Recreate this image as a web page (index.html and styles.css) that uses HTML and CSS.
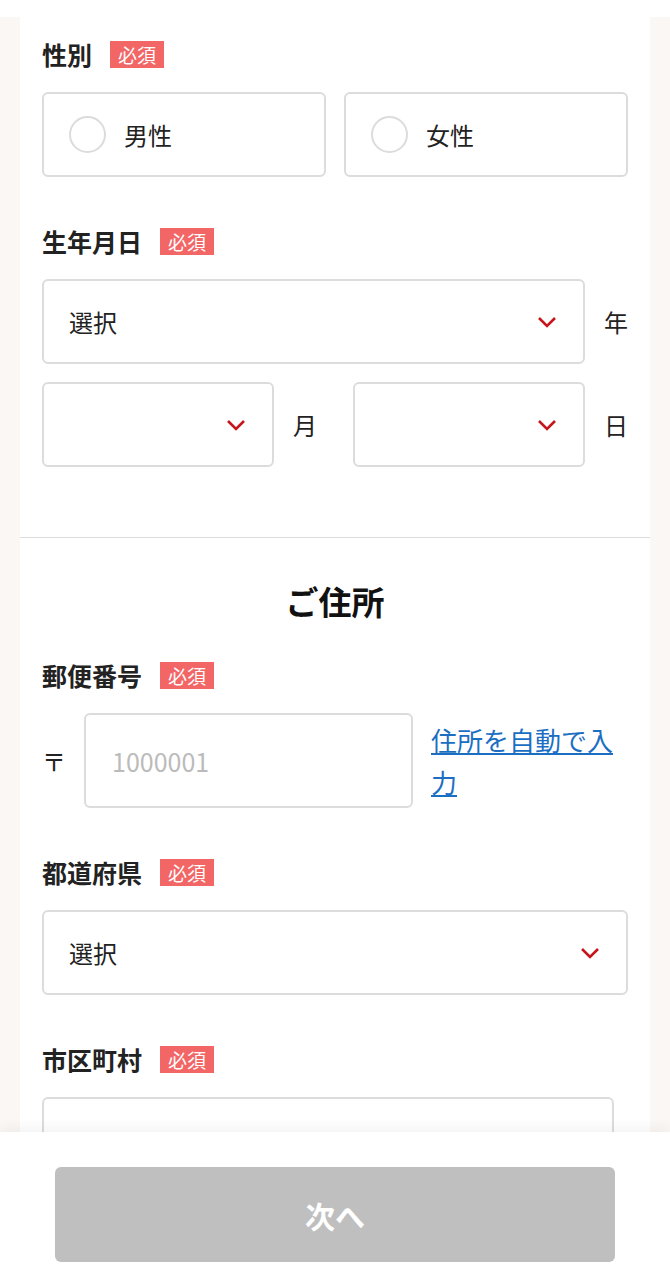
FILE: index.html
```html
<!DOCTYPE html>
<html lang="ja">

<head>
    <meta charset="UTF-8">
    <meta name="viewport" content="width=device-width, initial-scale=1.0">

    <title>会員登録</title>
    <link rel="stylesheet" href="styles.css">
</head>

<body>
    <div class="top-strip"></div>

    <div class="panel">
        <div class="section">
            <div class="field">
                <div class="field-label">
                    <span>性別</span>
                    <span class="badge">必須</span>
                </div>
                <div class="radio-group">
                    <label class="radio-box">
                        <span class="radio-circle"></span>
                        <span>男性</span>
                    </label>
                    <label class="radio-box">
                        <span class="radio-circle"></span>
                        <span>女性</span>
                    </label>
                </div>
            </div>

            <div class="field">
                <div class="field-label">
                    <span>生年月日</span>
                    <span class="badge">必須</span>
                </div>
                <div class="date-row">
                    <div class="select-box">
                        <span>選択</span>
                        <svg class="chevron" width="20" height="12" viewBox="0 0 20 12"><path d="M2 2 L10 10 L18 2" fill="none" stroke="#c4161c" stroke-width="2.6"/></svg>
                    </div>
                    <span class="unit">年</span>
                </div>
                <div class="date-pair">
                    <div class="date-row">
                        <div class="select-box">
                            <span></span>
                            <svg class="chevron" width="20" height="12" viewBox="0 0 20 12"><path d="M2 2 L10 10 L18 2" fill="none" stroke="#c4161c" stroke-width="2.6"/></svg>
                        </div>
                        <span class="unit">月</span>
                    </div>
                    <div class="date-row">
                        <div class="select-box">
                            <span></span>
                            <svg class="chevron" width="20" height="12" viewBox="0 0 20 12"><path d="M2 2 L10 10 L18 2" fill="none" stroke="#c4161c" stroke-width="2.6"/></svg>
                        </div>
                        <span class="unit">日</span>
                    </div>
                </div>
            </div>
        </div>

        <div class="section address">
            <h2 class="section-title">ご住所</h2>

            <div class="field">
                <div class="field-label">
                    <span>郵便番号</span>
                    <span class="badge">必須</span>
                </div>
                <div class="postal-row">
                    <span class="postal-mark">〒</span>
                    <input type="text" class="postal-input" placeholder="1000001">
                    <a href="#" class="auto-link">住所を自動で入力</a>
                </div>
            </div>

            <div class="field">
                <div class="field-label">
                    <span>都道府県</span>
                    <span class="badge">必須</span>
                </div>
                <div class="select-box">
                    <span>選択</span>
                    <svg class="chevron" width="20" height="12" viewBox="0 0 20 12"><path d="M2 2 L10 10 L18 2" fill="none" stroke="#c4161c" stroke-width="2.6"/></svg>
                </div>
            </div>

            <div class="field">
                <div class="field-label">
                    <span>市区町村</span>
                    <span class="badge">必須</span>
                </div>
                <input type="text" class="text-input city-input">
            </div>
        </div>
    </div>

    <div class="bottom-bar">
        <button class="next-button" disabled>次へ</button>
    </div>
</body>

</html>
```

FILE: styles.css
```css
body {
    margin: 0;
    background-color: #faf7f4;
    font-family: 'Noto Sans CJK JP', 'Noto Sans', sans-serif;
    color: #222;
}

.top-strip {
    height: 17px;
    background-color: white;
}

.panel {
    margin: 0 20px;
    background-color: white;
    padding-bottom: 220px;
}

.section {
    padding: 24px 22px 70px;
    border-bottom: 1px solid #dcdcdc;
}

.section.address {
    padding-top: 39px;
    border-bottom: none;
}

.section-title {
    margin: 0 0 37px;
    font-size: 33px;
    line-height: 48px;
    text-align: center;
    font-weight: bold;
    color: #111;
}

.field + .field {
    margin-top: 51px;
}

.field-label {
    display: flex;
    align-items: center;
    gap: 18px;
    height: 27px;
    margin-bottom: 24px;
    font-size: 25px;
    font-weight: bold;
    line-height: 1;
}

.badge {
    display: inline-block;
    width: 54px;
    height: 27px;
    line-height: 27px;
    text-align: center;
    background-color: #f26666;
    color: white;
    font-size: 19px;
    font-weight: normal;
}

.radio-group {
    display: grid;
    grid-template-columns: 1fr 1fr;
    gap: 18px;
}

.radio-box {
    display: flex;
    align-items: center;
    gap: 18px;
    height: 85px;
    box-sizing: border-box;
    padding-left: 25px;
    border: 2px solid #dcdcdc;
    border-radius: 6px;
    font-size: 24px;
}

.radio-circle {
    width: 37px;
    height: 37px;
    box-sizing: border-box;
    border: 2px solid #dcdcdc;
    border-radius: 50%;
}

.select-box {
    display: flex;
    align-items: center;
    justify-content: space-between;
    flex: 1;
    height: 85px;
    box-sizing: border-box;
    padding: 0 26px 0 25px;
    border: 2px solid #dcdcdc;
    border-radius: 6px;
    font-size: 24px;
}

.date-row {
    display: flex;
    align-items: center;
}

.unit {
    width: 43px;
    text-align: right;
    font-size: 24px;
}

.date-pair {
    display: grid;
    grid-template-columns: 1fr 1fr;
    gap: 36px;
    margin-top: 18px;
}

.postal-row {
    display: flex;
    align-items: center;
    margin-bottom: 2px;
}

.postal-mark {
    width: 42px;
    font-size: 24px;
}

.postal-input {
    width: 329px;
    height: 95px;
    box-sizing: border-box;
    padding: 0 26px;
    border: 2px solid #dcdcdc;
    border-radius: 6px;
    font-family: 'Noto Sans CJK JP', 'Noto Sans', sans-serif;
    font-size: 25px;
}

.postal-input::placeholder {
    color: #bbb;
}

.auto-link {
    flex: 1;
    margin-left: 18px;
    color: #1b6ec2;
    font-size: 26px;
    line-height: 42px;
}

.text-input {
    display: block;
    height: 85px;
    box-sizing: border-box;
    border: 2px solid #dcdcdc;
    border-radius: 6px;
}

.city-input {
    width: calc(100% - 14px);
}

.bottom-bar {
    position: fixed;
    left: 0;
    right: 0;
    bottom: 0;
    height: 156px;
    box-sizing: border-box;
    padding-top: 35px;
    background-color: white;
    box-shadow: 0 -4px 12px rgba(0, 0, 0, 0.05);
}

.next-button {
    display: block;
    width: 560px;
    height: 95px;
    margin: 0 auto;
    border: none;
    border-radius: 6px;
    background-color: #bfbfbf;
    color: white;
    font-family: 'Noto Sans CJK JP', 'Noto Sans', sans-serif;
    font-size: 30px;
    font-weight: bold;
}
```
